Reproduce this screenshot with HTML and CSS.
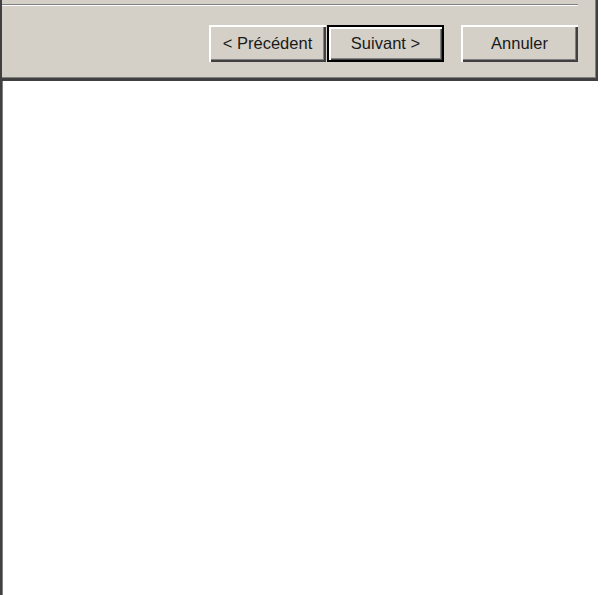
FILE: index.html
```html
<!DOCTYPE html>
<html lang="fr">
<head>
<meta charset="utf-8">
<title>Assistant</title>
<link rel="stylesheet" href="styles.css">
</head>
<body>
<div class="panel">
  <div class="sep"></div>
  <div class="buttons">
    <button class="btn">&lt; Précédent</button>
    <button class="btn default">Suivant &gt;</button>
    <button class="btn cancel">Annuler</button>
  </div>
</div>
<div class="content"></div>
</body>
</html>
```
FILE: styles.css
```css
html, body {
  margin: 0;
  padding: 0;
  background: #ffffff;
  height: 100%;
}
body {
  display: flex;
  flex-direction: column;
  width: 601px;
  height: 595px;
  overflow: hidden;
  font-family: "Liberation Sans", Arial, sans-serif;
}
.panel {
  box-sizing: border-box;
  width: 598px;
  height: 81px;
  background: #d4d0c8;
  border-left: 2px solid #404040;
  border-right: 2px solid #404040;
  border-bottom: 3px solid #404040;
  box-shadow: inset 0 -1px 0 #808080, inset -1px 0 0 #808080;
  display: flex;
  flex-direction: column;
}
.sep {
  margin-top: 4px;
  margin-right: 18px;
  height: 0;
  border-top: 1px solid #808080;
  border-bottom: 1px solid #ffffff;
}
.buttons {
  display: flex;
  justify-content: flex-end;
  padding-right: 18px;
  margin-top: 19px;
}
.btn {
  box-sizing: border-box;
  width: 117px;
  height: 37px;
  margin: 0;
  padding: 0 0 1px 0;
  background: #d4d0c8;
  border: none;
  font-family: "Liberation Sans", Arial, sans-serif;
  font-size: 16.5px;
  color: #1a1a1a;
  box-shadow:
    inset 2px 2px 0 #ffffff,
    inset -1px -1px 0 #404040,
    inset -2px -2px 0 #404040,
    inset -3px -3px 0 #808080;
}
.btn.default {
  margin-left: 1px;
  border: 2px solid #000000;
  box-shadow:
    inset 2px 2px 0 #ffffff,
    inset -1px -1px 0 #404040,
    inset -2px -2px 0 #808080;
}
.btn.cancel {
  margin-left: 17px;
}
.content {
  flex: 1;
  border-left: 2px solid #404040;
  box-shadow: inset 1px 0 0 #808080;
  background: #ffffff;
}
```
